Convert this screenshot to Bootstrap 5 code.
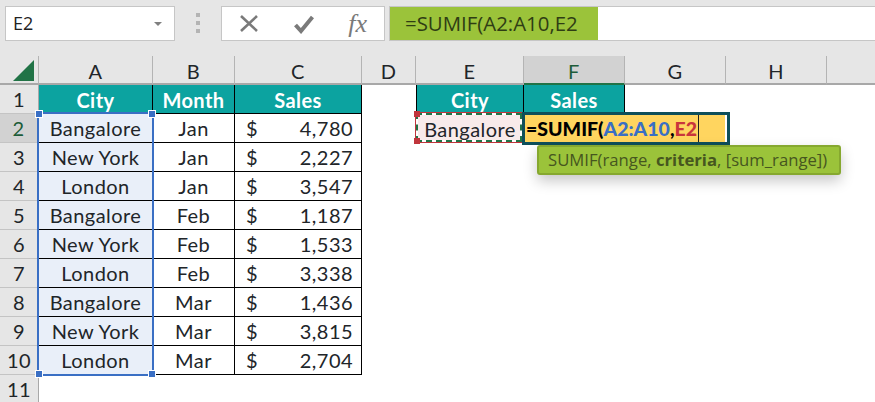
<!DOCTYPE html>
<html lang="en">
<head>
<meta charset="utf-8">
<title>SUMIF</title>
<link href="https://cdn.jsdelivr.net/npm/bootstrap@5.3.0/dist/css/bootstrap.min.css" rel="stylesheet">
<style>
html,body{height:402px;overflow:hidden}
body{background:#e6e6e6;font-family:Lato,"Liberation Sans",sans-serif;color:#000}
.xl-bar{height:56px;padding:6px 0 16px 5px}
.xl-box{height:35px;background:#fff;border:1px solid #c6c6c6;font-family:"Open Sans","Noto Sans",sans-serif}
.xl-name{width:170px;font-size:18px;padding:0 12px 0 7px;color:#222}
.xl-caret{width:0;height:0;border-left:4px solid transparent;border-right:4px solid transparent;border-top:4px solid #808080}
.xl-dots{width:46px}
.xl-dots i{display:block;width:4px;height:4px;background:#b4b4b4}
.xl-tools{width:164px;padding:0 17px 0 17px}
.xl-fx{font-family:"Liberation Serif",serif;font-style:italic;font-size:26px;color:#7a7a7a;line-height:1}
.xl-formula{flex:1;margin-left:4px;border-right:0}
.xl-formula-text{width:208px;height:100%;background:#9bc33a;color:#2f3d14;font-size:20.4px;padding-left:15px;white-space:nowrap}
.xl-sheet-wrap{width:875px;height:346px}
.xl-sheet.table{table-layout:fixed;width:875px;border-collapse:separate;border-spacing:0;--bs-table-bg:transparent}
.xl-sheet.table>:not(caption)>*>*{padding:0;height:29px;border:0;box-shadow:none;background:#fff;font-size:20px;letter-spacing:.45px;font-weight:400;line-height:1;vertical-align:middle;text-align:center}
.xl-sheet.table>thead>tr>th{background:#e6e6e6;border-right:1px solid #b4b4b4;border-bottom:2px solid #a8a8a8;height:29px;padding-top:3px}
.xl-sheet.table>thead>tr>th.xl-corner{position:relative;padding:0}
.xl-sheet.table>thead>tr>th.xl-on{background:#d2d2d2;border-bottom-color:#217346;color:#1c5c39}
.xl-sheet.table>thead>tr>th:last-child{border-right:0}
.xl-sheet.table>tbody>tr>th{background:#e6e6e6;border-right:1px solid #a8a8a8;border-bottom:1px solid #c4c4c4}
.xl-sheet.table>tbody>tr>th.xl-on{background:#d2d2d2;border-right:2px solid #217346;color:#1c5c39}
.xl-sheet.table>tbody>tr>td.xl-g{border-right:1px solid #000;border-bottom:1px solid #000}
.xl-sheet.table>tbody>tr>td.xl-a{background:#e9eff9}
.xl-sheet.table>tbody>tr>td.xl-h{background:#0ca3a0;color:#fff;font-weight:700;padding-top:1px}
.xl-sheet.table>tbody>tr>td.xl-l{border-left:1px solid #000}
.xl-sheet.table>tbody>tr>td.xl-e{background:#f8eaea}
.xl-money{padding:0 8px 0 11px}
.xl-sel{position:absolute;left:37px;top:56px;width:117px;height:264px;border:2px solid #3a6fc4;pointer-events:none}
.xl-hdl{position:absolute;width:6px;height:6px;background:#3a6fc4;outline:1px solid #fff}
.xl-ref{position:absolute;left:416px;top:57px;width:106px;height:29px;border:2px solid #fff;outline:1px solid #c0353c;pointer-events:none}
.xl-ref::after{content:"";position:absolute;inset:-2px;border:2px dashed #217346}
.xl-rh{position:absolute;width:6px;height:6px;background:#c0353c;z-index:1}
.xl-edit{position:absolute;left:522px;top:56px;width:208px;height:33px;background:#ffd55f;border:3px solid #0e4f5a;box-shadow:inset -2px 0 0 #fff;font-weight:900;font-size:19.5px;line-height:27px;padding-left:1px;white-space:nowrap}
.xl-blue{color:#3a6fc4}
.xl-red{color:#c9353c}
.xl-cur{display:inline-block;width:1px;height:27px;background:#222;vertical-align:top;margin-left:1px}
.xl-tip{position:absolute;left:537px;top:89px;width:304px;height:30px;background:#9bc33a;border:2px solid #86a82f;box-shadow:0 6px 14px rgba(0,0,0,.22);border-radius:3px;color:#46561f;font-family:"Open Sans","Noto Sans",sans-serif;font-size:16.7px;line-height:25px;padding-left:9px;white-space:nowrap}
</style>
</head>
<body>
<div class="xl-bar d-flex align-items-start">
  <div class="xl-box xl-name d-flex align-items-center justify-content-between"><span>E2</span><span class="xl-caret"></span></div>
  <div class="xl-dots d-flex flex-column align-items-center justify-content-center gap-1 h-100"><i></i><i></i><i></i></div>
  <div class="xl-box xl-tools d-flex align-items-center justify-content-between">
    <svg width="20" height="20" viewBox="0 0 20 20"><path d="M2 2 18 17M18 2 2 17" stroke="#7a7a7a" stroke-width="2.6" fill="none"/></svg>
    <svg width="20" height="20" viewBox="0 0 20 20"><path d="M1.500 11 7 17 18.500 3" stroke="#7a7a7a" stroke-width="4" fill="none"/></svg>
    <span class="xl-fx">fx</span>
  </div>
  <div class="xl-box xl-formula d-flex"><div class="xl-formula-text d-flex align-items-center">=SUMIF(A2:A10,E2</div></div>
</div>
<div class="xl-sheet-wrap position-relative overflow-hidden">
<table class="table xl-sheet mb-0">
<colgroup><col style="width:39px"><col style="width:114px"><col style="width:82px"><col style="width:127px"><col style="width:54px"><col style="width:108px"><col style="width:101px"><col style="width:101px"><col style="width:101px"><col style="width:48px"></colgroup>
<thead><tr>
<th class="xl-corner"><svg class="position-absolute" style="left:13px;top:4px" width="21" height="21" viewBox="0 0 21 21"><path d="M21 0V21H0Z" fill="#217346"/></svg></th>
<th>A</th><th>B</th><th>C</th><th>D</th><th>E</th><th class="xl-on">F</th><th>G</th><th>H</th><th></th>
</tr></thead>
<tbody>
<tr><th>1</th><td class="xl-g xl-h">City</td><td class="xl-g xl-h">Month</td><td class="xl-g xl-h">Sales</td><td></td><td class="xl-g xl-h xl-l">City</td><td class="xl-g xl-h">Sales</td><td></td><td></td><td></td></tr>
<tr><th class="xl-on">2</th><td class="xl-g xl-a">Bangalore</td><td class="xl-g">Jan</td><td class="xl-g"><div class="xl-money d-flex justify-content-between"><span>$</span><span>4,780</span></div></td><td></td><td class="xl-e">Bangalore</td><td></td><td></td><td></td><td></td></tr>
<tr><th>3</th><td class="xl-g xl-a">New York</td><td class="xl-g">Jan</td><td class="xl-g"><div class="xl-money d-flex justify-content-between"><span>$</span><span>2,227</span></div></td><td></td><td></td><td></td><td></td><td></td><td></td></tr>
<tr><th>4</th><td class="xl-g xl-a">London</td><td class="xl-g">Jan</td><td class="xl-g"><div class="xl-money d-flex justify-content-between"><span>$</span><span>3,547</span></div></td><td></td><td></td><td></td><td></td><td></td><td></td></tr>
<tr><th>5</th><td class="xl-g xl-a">Bangalore</td><td class="xl-g">Feb</td><td class="xl-g"><div class="xl-money d-flex justify-content-between"><span>$</span><span>1,187</span></div></td><td></td><td></td><td></td><td></td><td></td><td></td></tr>
<tr><th>6</th><td class="xl-g xl-a">New York</td><td class="xl-g">Feb</td><td class="xl-g"><div class="xl-money d-flex justify-content-between"><span>$</span><span>1,533</span></div></td><td></td><td></td><td></td><td></td><td></td><td></td></tr>
<tr><th>7</th><td class="xl-g xl-a">London</td><td class="xl-g">Feb</td><td class="xl-g"><div class="xl-money d-flex justify-content-between"><span>$</span><span>3,338</span></div></td><td></td><td></td><td></td><td></td><td></td><td></td></tr>
<tr><th>8</th><td class="xl-g xl-a">Bangalore</td><td class="xl-g">Mar</td><td class="xl-g"><div class="xl-money d-flex justify-content-between"><span>$</span><span>1,436</span></div></td><td></td><td></td><td></td><td></td><td></td><td></td></tr>
<tr><th>9</th><td class="xl-g xl-a">New York</td><td class="xl-g">Mar</td><td class="xl-g"><div class="xl-money d-flex justify-content-between"><span>$</span><span>3,815</span></div></td><td></td><td></td><td></td><td></td><td></td><td></td></tr>
<tr><th>10</th><td class="xl-g xl-a">London</td><td class="xl-g">Mar</td><td class="xl-g"><div class="xl-money d-flex justify-content-between"><span>$</span><span>2,704</span></div></td><td></td><td></td><td></td><td></td><td></td><td></td></tr>
<tr><th>11</th><td></td><td></td><td></td><td></td><td></td><td></td><td></td><td></td><td></td></tr>
</tbody>
</table>
<div class="xl-sel">
  <span class="xl-hdl" style="left:-3px;top:-3px"></span><span class="xl-hdl" style="right:-3px;top:-3px"></span>
  <span class="xl-hdl" style="left:-3px;bottom:-3px"></span><span class="xl-hdl" style="right:-3px;bottom:-3px"></span>
</div>
<div class="xl-ref">
  <span class="xl-rh" style="left:-4px;top:-4px"></span><span class="xl-rh" style="left:-4px;bottom:-4px"></span>
</div>
<div class="xl-edit">=SUMIF(<span class="xl-blue">A2:A10</span>,<span class="xl-red">E2</span><span class="xl-cur"></span></div>
<div class="xl-tip">SUMIF(range, <b>criteria</b>, [sum_range])</div>
</div>
</body>
</html>
